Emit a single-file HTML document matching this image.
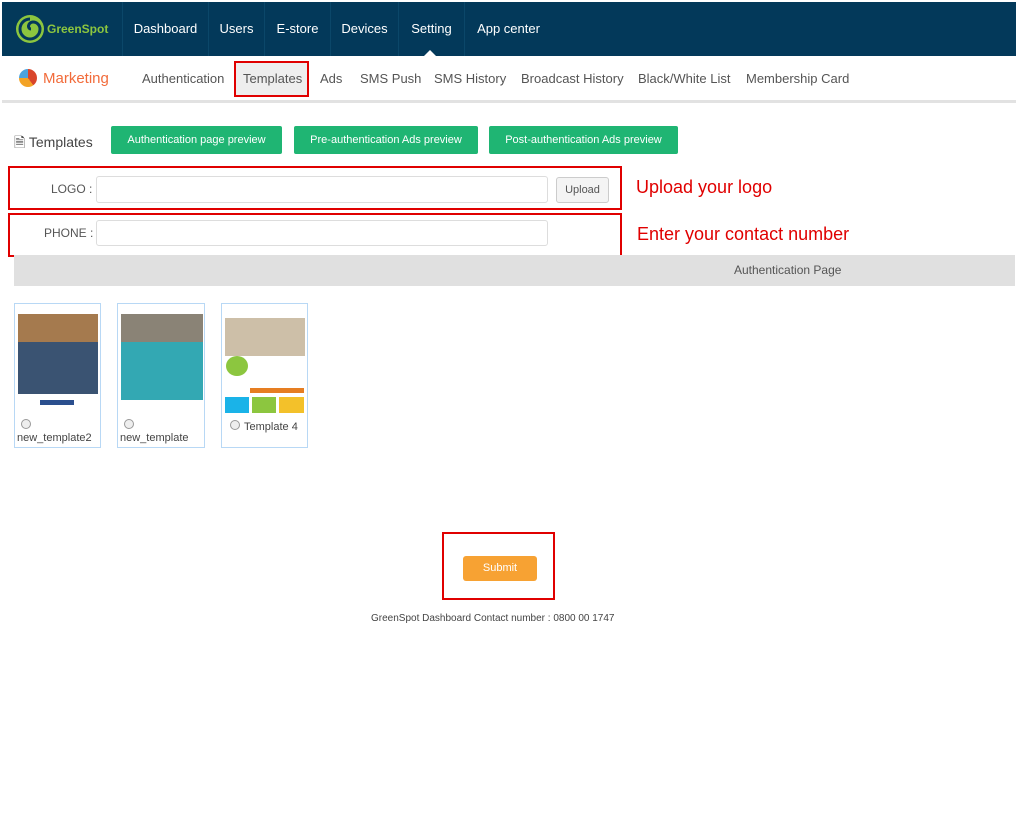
<!DOCTYPE html><html><head><meta charset="utf-8"><style>
*{margin:0;padding:0;box-sizing:border-box}
body{width:1020px;height:814px;background:#fff;font-family:"Liberation Sans",sans-serif;position:relative;overflow:hidden}
.abs{position:absolute}
.nav{left:2px;top:2px;width:1014px;height:54px;background:#03395a}
.nav .it{position:absolute;top:0;height:54px;line-height:54px;color:#fff;font-size:13px;border-left:1px solid #0b4769;text-align:center}
.sub{top:71px;font-size:13px;color:#555}
.btn{background:#1fb573;color:#fff;font-size:11px;height:28px;line-height:28px;text-align:center;border-radius:2px;top:126px}
.red{border:2px solid #e00000}
.inp{border:1px solid #ddd;border-radius:3px;background:#fff}
.thumb{border:1px solid #b8d8f5;top:303px;height:145px}
.lbl{font-size:11px;color:#444}
.radio{width:10px;height:10px;border:1px solid #999;border-radius:50%;background:#eee}
</style></head><body>
<div class="abs nav">
 <svg class="abs" style="left:13px;top:11px" width="30" height="32" viewBox="0 0 30 32"><circle cx="15" cy="16" r="14" fill="#8cc63f"/><path d="M15 6a10 10 0 1 0 10 10 7 7 0 0 0-7-7 4.5 4.5 0 0 0-4.5 4.5 2.5 2.5 0 0 0 2.5 2.5" stroke="#03395a" stroke-width="3" fill="none"/></svg>
 <div class="abs" style="left:45px;top:20px;color:#8cc63f;font-weight:bold;font-size:12px">GreenSpot</div>
 <div class="it" style="left:120px;width:86px">Dashboard</div>
 <div class="it" style="left:206px;width:56px">Users</div>
 <div class="it" style="left:262px;width:66px">E-store</div>
 <div class="it" style="left:328px;width:68px">Devices</div>
 <div class="it" style="left:396px;width:66px">Setting</div>
 <div class="it" style="left:462px;width:88px">App center</div>
 <div class="abs" style="left:422px;top:48px;width:0;height:0;border-left:6px solid transparent;border-right:6px solid transparent;border-bottom:6px solid #fff"></div>
</div>
<div class="abs" style="left:19px;top:69px;width:18px;height:18px;border-radius:50%;background:conic-gradient(#d9452b 0 40%,#f3a325 40% 75%,#4aa3df 75%)"></div>
<div class="abs" style="left:43px;top:70px;font-size:15px;color:#f26b3a">Marketing</div>
<div class="abs sub" style="left:142px;">Authentication</div>
<div class="abs red" style="left:234px;top:61px;width:75px;height:36px;background:#eee"></div>
<div class="abs sub" style="left:243px">Templates</div>
<div class="abs sub" style="left:320px">Ads</div>
<div class="abs sub" style="left:360px">SMS Push</div>
<div class="abs sub" style="left:434px">SMS History</div>
<div class="abs sub" style="left:521px">Broadcast History</div>
<div class="abs sub" style="left:638px">Black/White List</div>
<div class="abs sub" style="left:746px">Membership Card</div>
<div class="abs" style="left:2px;top:100px;width:1014px;height:3px;background:#e2e2e2"></div>
<div class="abs" style="left:14px;top:132px;font-size:14px;color:#444">&#128462; Templates</div>
<div class="abs btn" style="left:111px;width:171px">Authentication page preview</div>
<div class="abs btn" style="left:294px;width:184px">Pre-authentication Ads preview</div>
<div class="abs btn" style="left:489px;width:189px">Post-authentication Ads preview</div>
<div class="abs red" style="left:8px;top:166px;width:614px;height:44px"></div>
<div class="abs" style="left:51px;top:182px;font-size:12px;color:#555">LOGO :</div>
<div class="abs inp" style="left:96px;top:176px;width:452px;height:27px"></div>
<div class="abs" style="left:556px;top:177px;width:53px;height:26px;border:1px solid #ccc;border-radius:3px;background:#f4f4f4;font-size:11px;color:#555;text-align:center;line-height:24px">Upload</div>
<div class="abs" style="left:636px;top:177px;font-size:18px;color:#e00000">Upload your logo</div>
<div class="abs red" style="left:8px;top:213px;width:614px;height:44px"></div>
<div class="abs" style="left:44px;top:226px;font-size:12px;color:#555">PHONE :</div>
<div class="abs inp" style="left:96px;top:220px;width:452px;height:26px"></div>
<div class="abs" style="left:637px;top:224px;font-size:18px;color:#e00000">Enter your contact number</div>
<div class="abs" style="left:14px;top:255px;width:1001px;height:31px;background:#e0e0e0;font-size:12px;color:#555;line-height:31px;padding-left:720px">Authentication Page</div>
<div class="abs thumb" style="left:14px;width:87px">
 <div class="abs" style="left:3px;top:10px;width:80px;height:28px;background:#a57a4e"></div>
 <div class="abs" style="left:3px;top:38px;width:80px;height:52px;background:#3a5372"></div>
 <div class="abs" style="left:25px;top:96px;width:34px;height:5px;background:#2b4f8e"></div>
 <div class="abs radio" style="left:6px;top:115px"></div>
 <div class="abs lbl" style="left:2px;top:128px">new_template2</div>
</div>
<div class="abs thumb" style="left:117px;width:88px">
 <div class="abs" style="left:3px;top:10px;width:82px;height:28px;background:#8a8376"></div>
 <div class="abs" style="left:3px;top:38px;width:82px;height:58px;background:#33a8b3"></div>
 <div class="abs radio" style="left:6px;top:115px"></div>
 <div class="abs lbl" style="left:2px;top:128px">new_template</div>
</div>
<div class="abs thumb" style="left:221px;width:87px">
 <div class="abs" style="left:3px;top:14px;width:80px;height:38px;background:#cdbfa8"></div>
 <div class="abs" style="left:4px;top:52px;width:22px;height:20px;border-radius:50%;background:#8cc63f"></div>
 <div class="abs" style="left:28px;top:84px;width:54px;height:5px;background:#e67e22"></div>
 <div class="abs" style="left:3px;top:93px;width:24px;height:16px;background:#1ab3e8"></div>
 <div class="abs" style="left:30px;top:93px;width:24px;height:16px;background:#8cc63f"></div>
 <div class="abs" style="left:57px;top:93px;width:25px;height:16px;background:#f3c12a"></div>
 <div class="abs radio" style="left:8px;top:116px"></div>
 <div class="abs lbl" style="left:22px;top:117px">Template 4</div>
</div>
<div class="abs red" style="left:442px;top:532px;width:113px;height:68px"></div>
<div class="abs" style="left:463px;top:556px;width:74px;height:25px;background:#f7a233;border-radius:3px;color:#fff;font-size:11px;text-align:center;line-height:25px">Submit</div>
<div class="abs" style="left:371px;top:613px;font-size:10px;color:#444">GreenSpot Dashboard Contact number : 0800 00 1747</div>
</body></html>
